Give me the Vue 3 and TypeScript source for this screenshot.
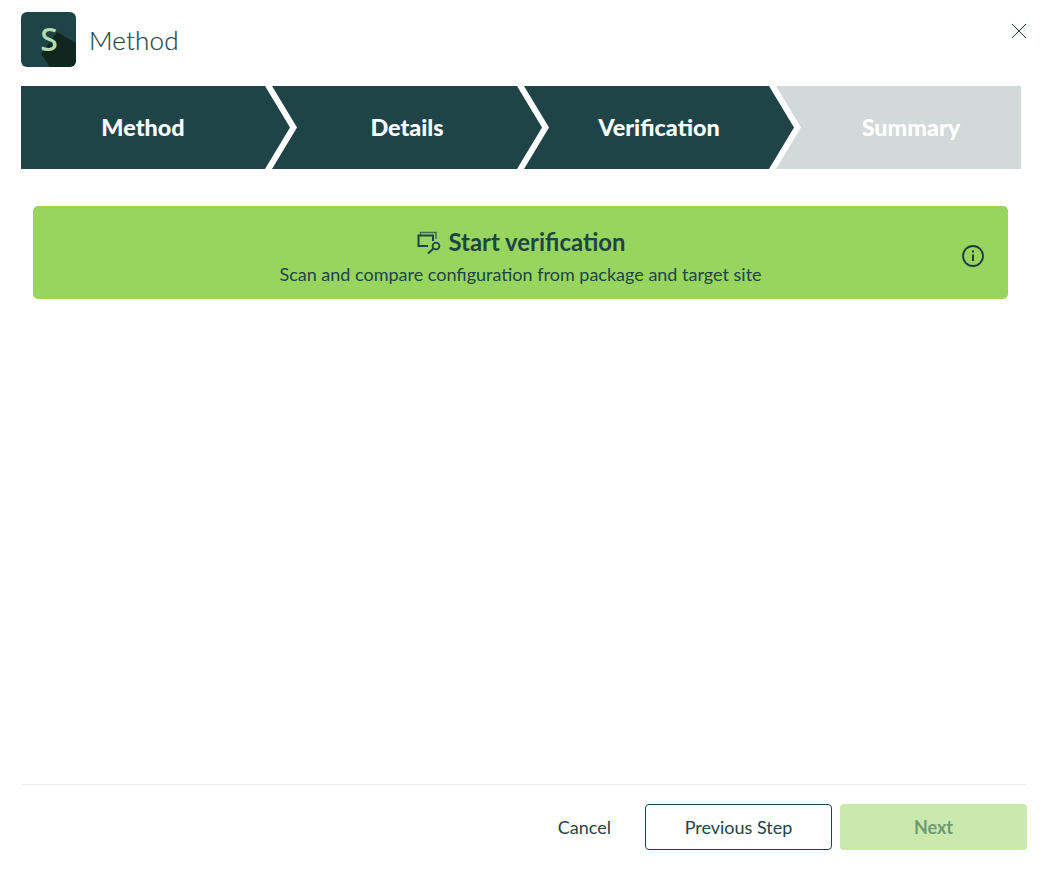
<script setup lang="ts">
const steps = [
  { label: "Method", done: true },
  { label: "Details", done: true },
  { label: "Verification", done: true },
  { label: "Summary", done: false },
];
</script>

<template>
  <div class="dialog">
    <header class="head">
      <div class="logo">
        <svg class="logo-shadow" width="55" height="55" viewBox="0 0 55 55">
          <path d="M36 20 L55 31 V49 a6 6 0 0 1 -6 6 H29 L20 42 Z" fill="#10261f" />
        </svg>
        <span class="logo-letter">S</span>
      </div>
      <h1 class="title">Method</h1>
      <button class="close" aria-label="Close">
        <svg width="16" height="16" viewBox="0 0 16 16">
          <path d="M1 1 L15 15 M15 1 L1 15" stroke="#1f4447" stroke-width="1" fill="none" />
        </svg>
      </button>
    </header>

    <div class="steps">
      <div
        v-for="(step, i) in steps"
        :key="step.label"
        :class="['step', { todo: !step.done, first: i === 0, last: i === steps.length - 1 }]"
      >
        {{ step.label }}
      </div>
    </div>

    <div class="banner">
      <div class="banner-title">
        <svg width="26" height="26" viewBox="0 0 26 26" fill="none" stroke="#1f4447">
          <path d="M4.5 7 V4.5 H20 V11" stroke="#3f6d50" stroke-width="1.5" />
          <path d="M12 18 H2.5 V7.5 H17 V13" stroke-width="2" />
          <circle cx="20" cy="18" r="3.4" stroke-width="1.8" />
          <path d="M17.5 20.5 L12 25.5" stroke-width="2" />
        </svg>
        <span>Start verification</span>
      </div>
      <div class="banner-sub">Scan and compare configuration from package and target site</div>
      <svg class="info" width="22" height="22" viewBox="0 0 22 22" fill="none" stroke="#1f3a44">
        <circle cx="11" cy="11" r="10" stroke-width="1.8" />
        <path d="M11 9.5 V16" stroke-width="2" />
        <path d="M11 5.6 V7.6" stroke-width="2" />
      </svg>
    </div>

    <div class="spacer"></div>

    <footer class="foot">
      <button class="btn cancel">Cancel</button>
      <button class="btn prev">Previous Step</button>
      <button class="btn next" disabled>Next</button>
    </footer>
  </div>
</template>

<style>
html,
body {
  margin: 0;
  background: #fff;
}
</style>

<style scoped>
.dialog {
  box-sizing: border-box;
  width: 1048px;
  height: 872px;
  padding: 12px 21px 22px;
  display: flex;
  flex-direction: column;
  font-family: Lato, "Open Sans", sans-serif;
  color: #1f4447;
}

.head {
  display: flex;
  align-items: center;
  height: 55px;
  gap: 13px;
  position: relative;
}

.logo {
  position: relative;
  width: 55px;
  height: 55px;
  border-radius: 6px;
  overflow: hidden;
  background: #1f4447;
  display: flex;
  align-items: center;
  justify-content: center;
}

.logo-shadow {
  position: absolute;
  left: 0;
  top: 0;
}

.logo-letter {
  position: relative;
  font-family: "Noto Sans", sans-serif;
  font-size: 32px;
  font-weight: 500;
  color: #b4dcae;
  margin-left: 1px;
  margin-top: -2px;
}

.title {
  margin: 0;
  font-size: 26px;
  font-weight: 300;
  letter-spacing: 0.15px;
  color: #1f4447;
  -webkit-text-stroke: 0.2px #1f4447;
}

.close {
  position: absolute;
  right: 0;
  top: 11px;
  padding: 0;
  border: 0;
  background: none;
  display: flex;
}

.steps {
  display: flex;
  width: 1000px;
  height: 83px;
  margin-top: 19px;
}

.step {
  box-sizing: border-box;
  width: 270px;
  margin-left: -18px;
  padding: 0 25px 2px;
  display: flex;
  align-items: center;
  justify-content: center;
  background: #1f4447;
  color: #fff;
  font-size: 23.4px;
  font-weight: 900;
  clip-path: polygon(0 0, calc(100% - 25px) 0, 100% 50%, calc(100% - 25px) 100%, 0 100%, 25px 50%);
}

.step.first {
  margin-left: 0;
  width: 269px;
  padding-left: 0;
  clip-path: polygon(0 0, calc(100% - 25px) 0, 100% 50%, calc(100% - 25px) 100%, 0 100%);
}

.step.last {
  width: 245px;
  padding-right: 0;
  clip-path: polygon(0 0, 100% 0, 100% 100%, 0 100%, 25px 50%);
}

.step.todo {
  background: #d2d9d9;
}

.banner {
  position: relative;
  width: 975px;
  height: 93px;
  box-sizing: border-box;
  margin: 37px 0 0 12px;
  padding-top: 20px;
  background: #97d55f;
  border-radius: 5px;
  text-align: center;
}

.banner-title {
  display: flex;
  align-items: center;
  justify-content: center;
  gap: 7px;
  height: 30px;
  font-size: 23.9px;
  font-weight: 700;
}

.banner-sub {
  margin-top: 6px;
  font-size: 18px;
  line-height: 24px;
}

.info {
  position: absolute;
  right: 24px;
  top: 39px;
}

.spacer {
  flex: 1;
}

.foot {
  display: flex;
  align-items: center;
  justify-content: flex-end;
  gap: 8px;
  padding-top: 19px;
  border-top: 1px solid #e9ecec;
}

.btn {
  box-sizing: border-box;
  width: 187px;
  height: 46px;
  border-radius: 4px;
  font-family: inherit;
  font-size: 18px;
  color: #1f4447;
  background: none;
  border: 1px solid transparent;
}

.cancel {
  width: auto;
  padding: 0;
  margin-right: 25px;
}

.prev {
  border-color: #1f4447;
}

.next {
  background: #cbe9ac;
  color: #6e9a76;
  font-weight: 700;
}
</style>
